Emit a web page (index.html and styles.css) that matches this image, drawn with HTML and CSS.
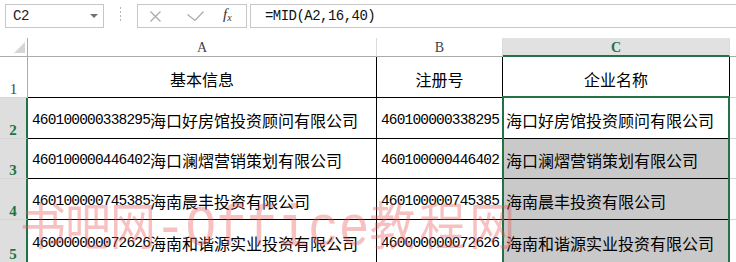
FILE: index.html
```html
<!DOCTYPE html>
<html lang="zh-CN">
<head>
  <meta charset="UTF-8" />
  <title>MID 提取企业名称</title>
  <link rel="stylesheet" href="styles.css">
</head>
<body>
  <div class="fbar">
    <div class="namebox"><span>C2</span><span class="caret"></span></div>
    <div class="dots">
      <svg width="3" height="17" viewBox="0 0 3 17"><rect x="1" y="1" width="1" height="2" fill="#b5b5b5"/><rect x="1" y="5" width="1" height="2" fill="#b5b5b5"/><rect x="1" y="9" width="1" height="2" fill="#b5b5b5"/><rect x="1" y="13" width="1" height="2" fill="#b5b5b5"/></svg>
    </div>
    <div class="fbtns">
      <svg class="ic-x" width="11" height="11" viewBox="0 0 11 11"><path d="M0.5 0.5L10.5 10.5M10.5 0.5L0.5 10.5" stroke="#a9a9a9" stroke-width="1.2" fill="none"/></svg>
      <svg class="ic-ok" width="17" height="11" viewBox="0 0 17 11"><path d="M0.5 3.5L8 9.5L16.5 0.5" stroke="#a9a9a9" stroke-width="1.2" fill="none"/></svg>
      <span class="fx">f<sub>x</sub></span>
    </div>
    <div class="finput">=MID(A2,16,40)</div>
  </div>

  <div class="sheet">
    <div class="corner"></div>
    <div class="ch">A</div>
    <div class="ch">B</div>
    <div class="ch on">C</div>
    <div class="ch rest"></div>

    <div class="rh">1</div>
    <div class="cell head">基本信息</div>
    <div class="cell head">注册号</div>
    <div class="cell head">企业名称</div>
    <div class="cell rest"></div>

    <div class="rh on">2</div>
    <div class="cell"><span class="n">460100000338295</span>海口好房馆投资顾问有限公司</div>
    <div class="cell"><span class="n">460100000338295</span></div>
    <div class="cell c">海口好房馆投资顾问有限公司</div>
    <div class="cell rest"></div>

    <div class="rh on">3</div>
    <div class="cell"><span class="n">460100000446402</span>海口澜熠营销策划有限公司</div>
    <div class="cell"><span class="n">460100000446402</span></div>
    <div class="cell c sel">海口澜熠营销策划有限公司</div>
    <div class="cell rest"></div>

    <div class="rh on">4</div>
    <div class="cell"><span class="n">460100000745385</span>海南晨丰投资有限公司</div>
    <div class="cell"><span class="n">460100000745385</span></div>
    <div class="cell c sel">海南晨丰投资有限公司</div>
    <div class="cell rest"></div>

    <div class="rh on">5</div>
    <div class="cell"><span class="n">460000000072626</span>海南和谐源实业投资有限公司</div>
    <div class="cell"><span class="n">460000000072626</span></div>
    <div class="cell c sel">海南和谐源实业投资有限公司</div>
    <div class="cell rest"></div>

    <div class="selbox"></div>
  </div>

  <div class="wm"><span class="w1">书吧网</span><span class="w2">-Office</span><span class="w3">教程网</span></div>
</body>
</html>
```

FILE: styles.css
```css
* {
  box-sizing: border-box;
}
body {
  margin: 0;
  width: 736px;
  height: 262px;
  overflow: hidden;
  position: relative;
  background: #fff;
  color: #000;
  font-family: "Noto Sans CJK SC", sans-serif;
}

/* formula bar */
.fbar {
  display: flex;
  align-items: flex-start;
  height: 38px;
  padding-top: 4px;
}
.namebox {
  display: flex;
  align-items: center;
  justify-content: space-between;
  width: 99px;
  height: 24px;
  margin-left: 5px;
  padding: 0 5px 0 7px;
  border: 1px solid #c6c6c6;
  font: 14px "Liberation Mono", monospace;
  letter-spacing: -0.5px;
  color: #222;
}
.caret {
  width: 0;
  height: 0;
  border-left: 4px solid transparent;
  border-right: 4px solid transparent;
  border-top: 4px solid #707070;
}
.dots {
  width: 33px;
  height: 24px;
  display: flex;
  justify-content: center;
  padding-top: 2px;
}
.fbtns {
  display: flex;
  align-items: center;
  width: 110px;
  height: 24px;
  border: 1px solid #c6c6c6;
  padding-left: 12px;
}
.ic-ok {
  margin-left: 26px;
}
.fx {
  margin-left: 19px;
  font: italic 15px "Liberation Serif", serif;
  color: #333;
  line-height: 1;
  margin-top: -2px;
}
.fx sub {
  font-size: 10px;
  vertical-align: -2px;
}
.finput {
  flex: 1;
  height: 24px;
  margin-left: 3px;
  padding-left: 14px;
  border: 1px solid #c6c6c6;
  border-right: none;
  font: 14px "Liberation Mono", monospace;
  letter-spacing: -0.53px;
  line-height: 22px;
  color: #111;
}

/* sheet */
.sheet {
  position: relative;
  display: grid;
  grid-template-columns: 28px 349px 126px 227px 1fr;
  grid-template-rows: 19px 41px 41px 40px 41px 43px;
}
.corner {
  position: relative;
  border-right: 1px solid #ababab;
  border-bottom: 1px solid #ababab;
}
.corner::after {
  content: "";
  position: absolute;
  right: 2px;
  bottom: 3px;
  width: 0;
  height: 0;
  border-left: 11px solid transparent;
  border-bottom: 11px solid #d6d6d6;
}
.ch {
  display: flex;
  justify-content: center;
  align-items: center;
  padding-top: 2px;
  border-right: 1px solid #dadada;
  border-bottom: 1px solid #ababab;
  font: 14px "Liberation Serif", serif;
  color: #444;
}
.ch.on {
  background: #e1e1e1;
  border-bottom: 2px solid #217346;
  color: #217346;
  font-weight: bold;
  padding-top: 3px;
}
.ch.rest {
  border-right: none;
}
.rh {
  display: flex;
  justify-content: center;
  align-items: flex-end;
  border-right: 1px solid #ababab;
  border-bottom: 1px solid #d5d5d5;
  font: 15px "Liberation Serif", serif;
  line-height: 15px;
  color: #444;
}
.rh.on {
  background: #dedede;
  border-right: 2px solid #217346;
  color: #217346;
  font-weight: bold;
}
.cell {
  display: flex;
  align-items: center;
  padding: 3px 0 0 4px;
  border-right: 1px solid #000;
  border-bottom: 1px solid #000;
  font-size: 16px;
  white-space: nowrap;
  overflow: hidden;
}
.cell.head {
  justify-content: center;
  padding-left: 0;
}
.cell.c {
  padding-left: 3px;
}
.cell.sel {
  background: #c9c9c9;
}
.cell.rest {
  border-right: none;
  border-bottom-color: #d4d4d4;
}
.n {
  font: 14.5px "Liberation Mono", monospace;
  letter-spacing: -0.83px;
}

/* selection outline C2:C5, drawn over the cells */
.selbox {
  position: absolute;
  left: 502px;
  top: 58px;
  width: 228px;
  height: 220px;
  border: 2px solid #217346;
  pointer-events: none;
}

/* watermark over the sheet */
.wm {
  position: absolute;
  left: 20px;
  top: 197px;
  font-size: 46px;
  line-height: 46px;
  color: rgba(236, 84, 84, 0.36);
  white-space: nowrap;
  pointer-events: none;
  transform: scaleY(1.12);
  transform-origin: left top;
}
.wm .w1 {
  letter-spacing: -1px;
}
.wm .w2 {
  font: 51px "Liberation Mono", monospace;
}
.wm .w3 {
  letter-spacing: 4px;
}
```
